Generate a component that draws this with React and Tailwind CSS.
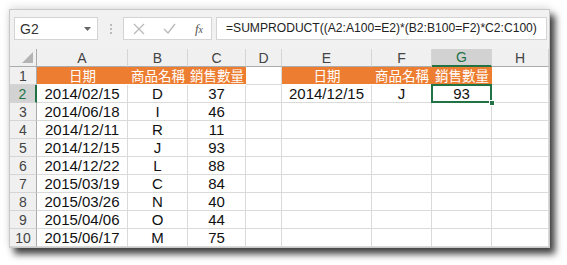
import React from "react";

const cols = ["A", "B", "C", "D", "E", "F", "G", "H"];
const data = [
  ["2014/02/15", "D", "37"],
  ["2014/06/18", "I", "46"],
  ["2014/12/11", "R", "11"],
  ["2014/12/15", "J", "93"],
  ["2014/12/22", "L", "88"],
  ["2015/03/19", "C", "84"],
  ["2015/03/26", "N", "40"],
  ["2015/04/06", "O", "44"],
  ["2015/06/17", "M", "75"],
];

function Cell({ children, orange }) {
  return (
    <div
      className={`h-[18px] flex items-center justify-center text-[15px] leading-none ${
        orange
          ? "bg-[#ed7d31] text-white border-b border-b-white"
          : "bg-white text-[#111] border-r border-b border-[#dadada]"
      }`}
    >
      {children}
    </div>
  );
}

function Zh({ children }) {
  return <span className="font-['Noto_Sans_CJK_TC','Noto_Sans',sans-serif] text-[13.5px]">{children}</span>;
}

export default function App() {
  const rows = [];
  for (let r = 1; r <= 10; r++) {
    const sel = r === 2;
    rows.push(
      <div
        key={"h" + r}
        className={`h-[18px] flex items-center justify-center text-[14px] leading-none border-b border-[#d5d5d5] ${
          sel
            ? "bg-[#d2d2d2] text-[#217346] border-r-2 border-r-[#217346]"
            : "bg-[#f0f0f0] text-[#444] border-r border-r-[#ababab]"
        }`}
      >
        {r}
      </div>
    );
    if (r === 1) {
      rows.push(
        <Cell key="a1" orange><Zh>日期</Zh></Cell>,
        <Cell key="b1" orange><Zh>商品名稱</Zh></Cell>,
        <Cell key="c1" orange><Zh>銷售數量</Zh></Cell>,
        <Cell key="d1" />,
        <Cell key="e1" orange><Zh>日期</Zh></Cell>,
        <Cell key="f1" orange><Zh>商品名稱</Zh></Cell>,
        <Cell key="g1" orange><Zh>銷售數量</Zh></Cell>,
        <Cell key="h1" />
      );
    } else {
      const d = data[r - 2];
      rows.push(
        <Cell key={"a" + r}>{d[0]}</Cell>,
        <Cell key={"b" + r}>{d[1]}</Cell>,
        <Cell key={"c" + r}>{d[2]}</Cell>,
        <Cell key={"d" + r} />
      );
      if (r === 2) {
        rows.push(
          <Cell key="e2">2014/12/15</Cell>,
          <Cell key="f2">J</Cell>,
          <div key="g2" className="relative h-[18px] bg-white border-r border-b border-[#dadada]">
            <div className="absolute left-[-1px] top-[-1px] right-[-1px] bottom-[-1px] border-2 border-[#217346] flex items-center justify-center text-[15px] leading-none text-[#111]">
              93
            </div>
            <div className="absolute right-[-4px] bottom-[-4px] w-[6px] h-[6px] bg-[#217346] border border-white" />
          </div>,
          <Cell key="h2" />
        );
      } else {
        rows.push(
          <Cell key={"e" + r} />,
          <Cell key={"f" + r} />,
          <Cell key={"g" + r} />,
          <Cell key={"h" + r} />
        );
      }
    }
  }

  return (
    <div className="w-[567px] h-[265px] bg-white overflow-hidden pl-[9px] pt-[9px] font-['Liberation_Sans',Arial,sans-serif]">
      <div className="w-[541px] h-[239px] bg-[#f1f1f1] border border-[#c9c9c9] shadow-[5px_6px_7px_rgba(0,0,0,0.75),0_-2px_8px_rgba(0,0,0,0.12)] flex flex-col overflow-hidden">
        {/* formula bar */}
        <div className="h-[39px] flex items-start pt-[7px] pl-[4px] pr-[2px] shrink-0">
          <div className="w-[84px] h-[23px] bg-white border border-[#d4d4d4] flex items-center justify-between pl-[5px] pr-[6px]">
            <span className="text-[14px] text-[#333] leading-none">G2</span>
            <svg width="7" height="4" viewBox="0 0 7 4"><path d="M0 0h7L3.5 4z" fill="#666" /></svg>
          </div>
          <div className="w-[25px] h-[23px] flex flex-col items-center justify-center gap-[2px]">
            <div className="w-[2px] h-[2px] bg-[#bbb]" />
            <div className="w-[2px] h-[2px] bg-[#bbb]" />
            <div className="w-[2px] h-[2px] bg-[#bbb]" />
          </div>
          <div className="w-[89px] h-[23px] bg-white border border-[#d4d4d4] flex items-center justify-between pl-[9px] pr-[8px]">
            <svg width="12" height="12" viewBox="0 0 12 12"><path d="M1 1l10 10M11 1L1 11" stroke="#b8b8b8" strokeWidth="1.2" /></svg>
            <svg width="13" height="11" viewBox="0 0 13 11"><path d="M1 6l4 4 7-9" stroke="#b8b8b8" strokeWidth="1.3" fill="none" /></svg>
            <span className="text-[13px] italic text-[#555] leading-none font-['Liberation_Serif',serif]">
              f<span className="text-[10px]">x</span>
            </span>
          </div>
          <div className="flex-1 h-[23px] ml-[4px] bg-white border border-[#d4d4d4] flex items-center pl-[9px]">
            <span className="text-[12.1px] text-[#222] leading-none whitespace-nowrap">
              =SUMPRODUCT((A2:A100=E2)*(B2:B100=F2)*C2:C100)
            </span>
          </div>
        </div>
        {/* grid */}
        <div className="grid grid-cols-[27px_91px_60px_58px_36px_90px_60px_60px_1fr]">
          <div className="h-[18px] bg-[#f0f0f0] border-r border-b border-[#ababab] relative">
            <div className="absolute right-[3px] bottom-[3px] w-0 h-0 border-l-[11px] border-l-transparent border-b-[11px] border-b-[#b4b4b4]" />
          </div>
          {cols.map((c) => (
            <div
              key={c}
              className={`h-[18px] flex items-center justify-center text-[14px] leading-none border-r border-[#d5d5d5] ${
                c === "G"
                  ? "bg-[#d2d2d2] text-[#217346] border-b-2 border-b-[#217346]"
                  : "bg-[#f0f0f0] text-[#444] border-b border-b-[#ababab]"
              }`}
            >
              {c}
            </div>
          ))}
          {rows}
        </div>
      </div>
    </div>
  );
}
